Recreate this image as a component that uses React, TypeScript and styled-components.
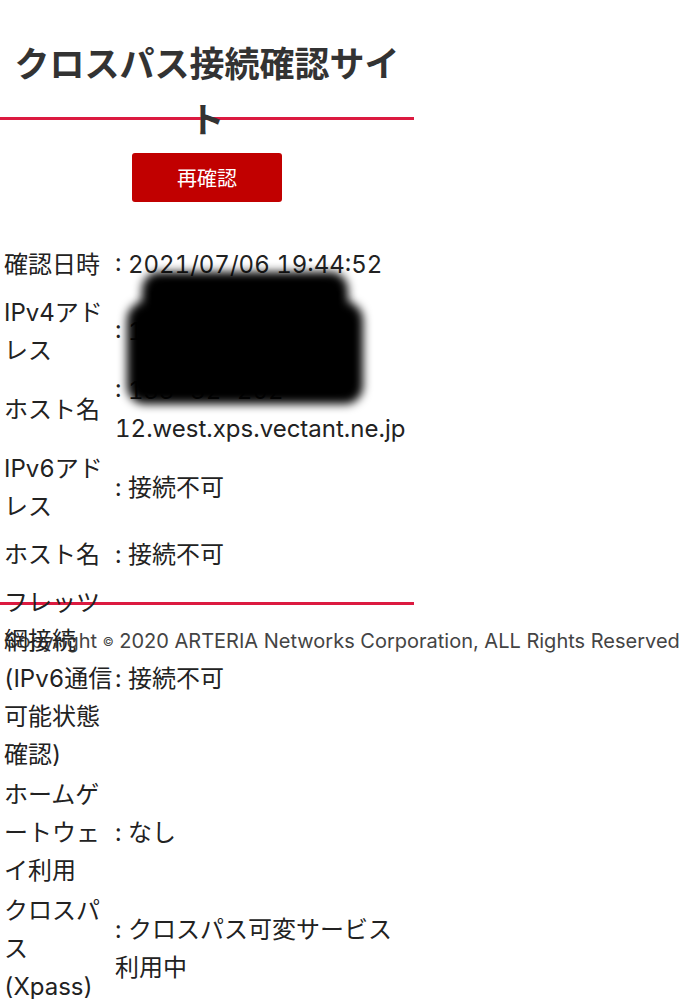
import React from 'react'
import styled, { createGlobalStyle } from 'styled-components'

const GlobalStyle = createGlobalStyle`
  html, body {
    margin: 0;
    padding: 0;
    background: #ffffff;
  }

  body {
    min-height: 100vh;
    font-family: Inter, "Noto Sans CJK JP", sans-serif;
    color: #222222;
  }
`

const Page = styled.div`
  width: 414px;
  min-height: 100vh;
`

const Header = styled.header`
  height: 117px;
  border-bottom: 3px solid #dc1a40;
`

const Title = styled.h1`
  margin: 0;
  padding-top: 34px;
  font-family: "Noto Sans CJK JP", sans-serif;
  font-size: 35px;
  font-weight: 700;
  line-height: 56px;
  text-align: center;
  color: #333333;
`

// fixed height: the result list runs out of it and under the footer
const Main = styled.main`
  display: flow-root;
  position: relative;
  height: 482px;
`

const RecheckButton = styled.button`
  display: block;
  margin: 33px auto 0;
  width: 150px;
  height: 49px;
  border: none;
  border-radius: 3px;
  background-color: #c10000;
  color: #ffffff;
  font-family: "Noto Sans CJK JP", sans-serif;
  font-size: 20px;
  cursor: pointer;
`

const ResultList = styled.dl`
  margin: 35px 0 0;
  font-size: 24px;
  line-height: 38px;
  font-variant-numeric: tabular-nums;
`

const Row = styled.div`
  display: grid;
  grid-template-columns: 115px 1fr;
  align-items: center;
  min-height: 54px;
  padding: 1px 0;
`

const Label = styled.dt`
  padding-left: 4px;
`

const Value = styled.dd`
  margin: 0;
`

const Redaction = styled.div<{ $top: number; $left: number; $width: number; $height: number }>`
  position: absolute;
  top: ${(p) => p.$top}px;
  left: ${(p) => p.$left}px;
  width: ${(p) => p.$width}px;
  height: ${(p) => p.$height}px;
  border-radius: 18px;
  background-color: #000000;
  filter: blur(5px);
`

const Footer = styled.footer`
  border-top: 3px solid #dc1a40;
  padding: 22px 0 0 4px;
`

const Copyright = styled.p`
  margin: 0;
  white-space: nowrap;
  font-size: 20px;
  line-height: 28px;
  color: #444444;
`

const CopyMark = styled.span`
  font-size: 12px;
  vertical-align: 2px;
`

interface ResultRow {
  label: string[]
  value: string[]
}

const rows: ResultRow[] = [
  { label: ['確認日時'], value: [': 2021/07/06 19:44:52'] },
  { label: ['IPv4アド', 'レス'], value: [': 133.32.202.12'] },
  { label: ['ホスト名'], value: [': 133-32-202-', '12.west.xps.vectant.ne.jp'] },
  { label: ['IPv6アド', 'レス'], value: [': 接続不可'] },
  { label: ['ホスト名'], value: [': 接続不可'] },
  { label: ['フレッツ', '網接続', '(IPv6通信', '可能状態', '確認)'], value: [': 接続不可'] },
  { label: ['ホームゲ', 'ートウェ', 'イ利用'], value: [': なし'] },
  { label: ['クロスパ', 'ス', '(Xpass)'], value: [': クロスパス可変サービス', '利用中'] },
]

function Lines({ lines }: { lines: string[] }) {
  return (
    <>
      {lines.map((line, i) => (
        <React.Fragment key={i}>
          {i > 0 && <br />}
          {line}
        </React.Fragment>
      ))}
    </>
  )
}

export default function App() {
  return (
    <>
      <GlobalStyle />
      <Page>
        <Header>
          <Title>クロスパス接続確認サイト</Title>
        </Header>
        <Main>
          <RecheckButton type="button">再確認</RecheckButton>
          <ResultList>
            {rows.map((row, i) => (
              <Row key={i}>
                <Label>
                  <Lines lines={row.label} />
                </Label>
                <Value>
                  <Lines lines={row.value} />
                </Value>
              </Row>
            ))}
          </ResultList>
          {/* blurred mask over the address */}
          <Redaction $top={152} $left={142} $width={206} $height={52} />
          <Redaction $top={182} $left={127} $width={236} $height={102} />
        </Main>
        <Footer>
          <Copyright>
            Copyright <CopyMark>©</CopyMark> 2020 ARTERIA Networks Corporation, ALL Rights Reserved
          </Copyright>
        </Footer>
      </Page>
    </>
  )
}
